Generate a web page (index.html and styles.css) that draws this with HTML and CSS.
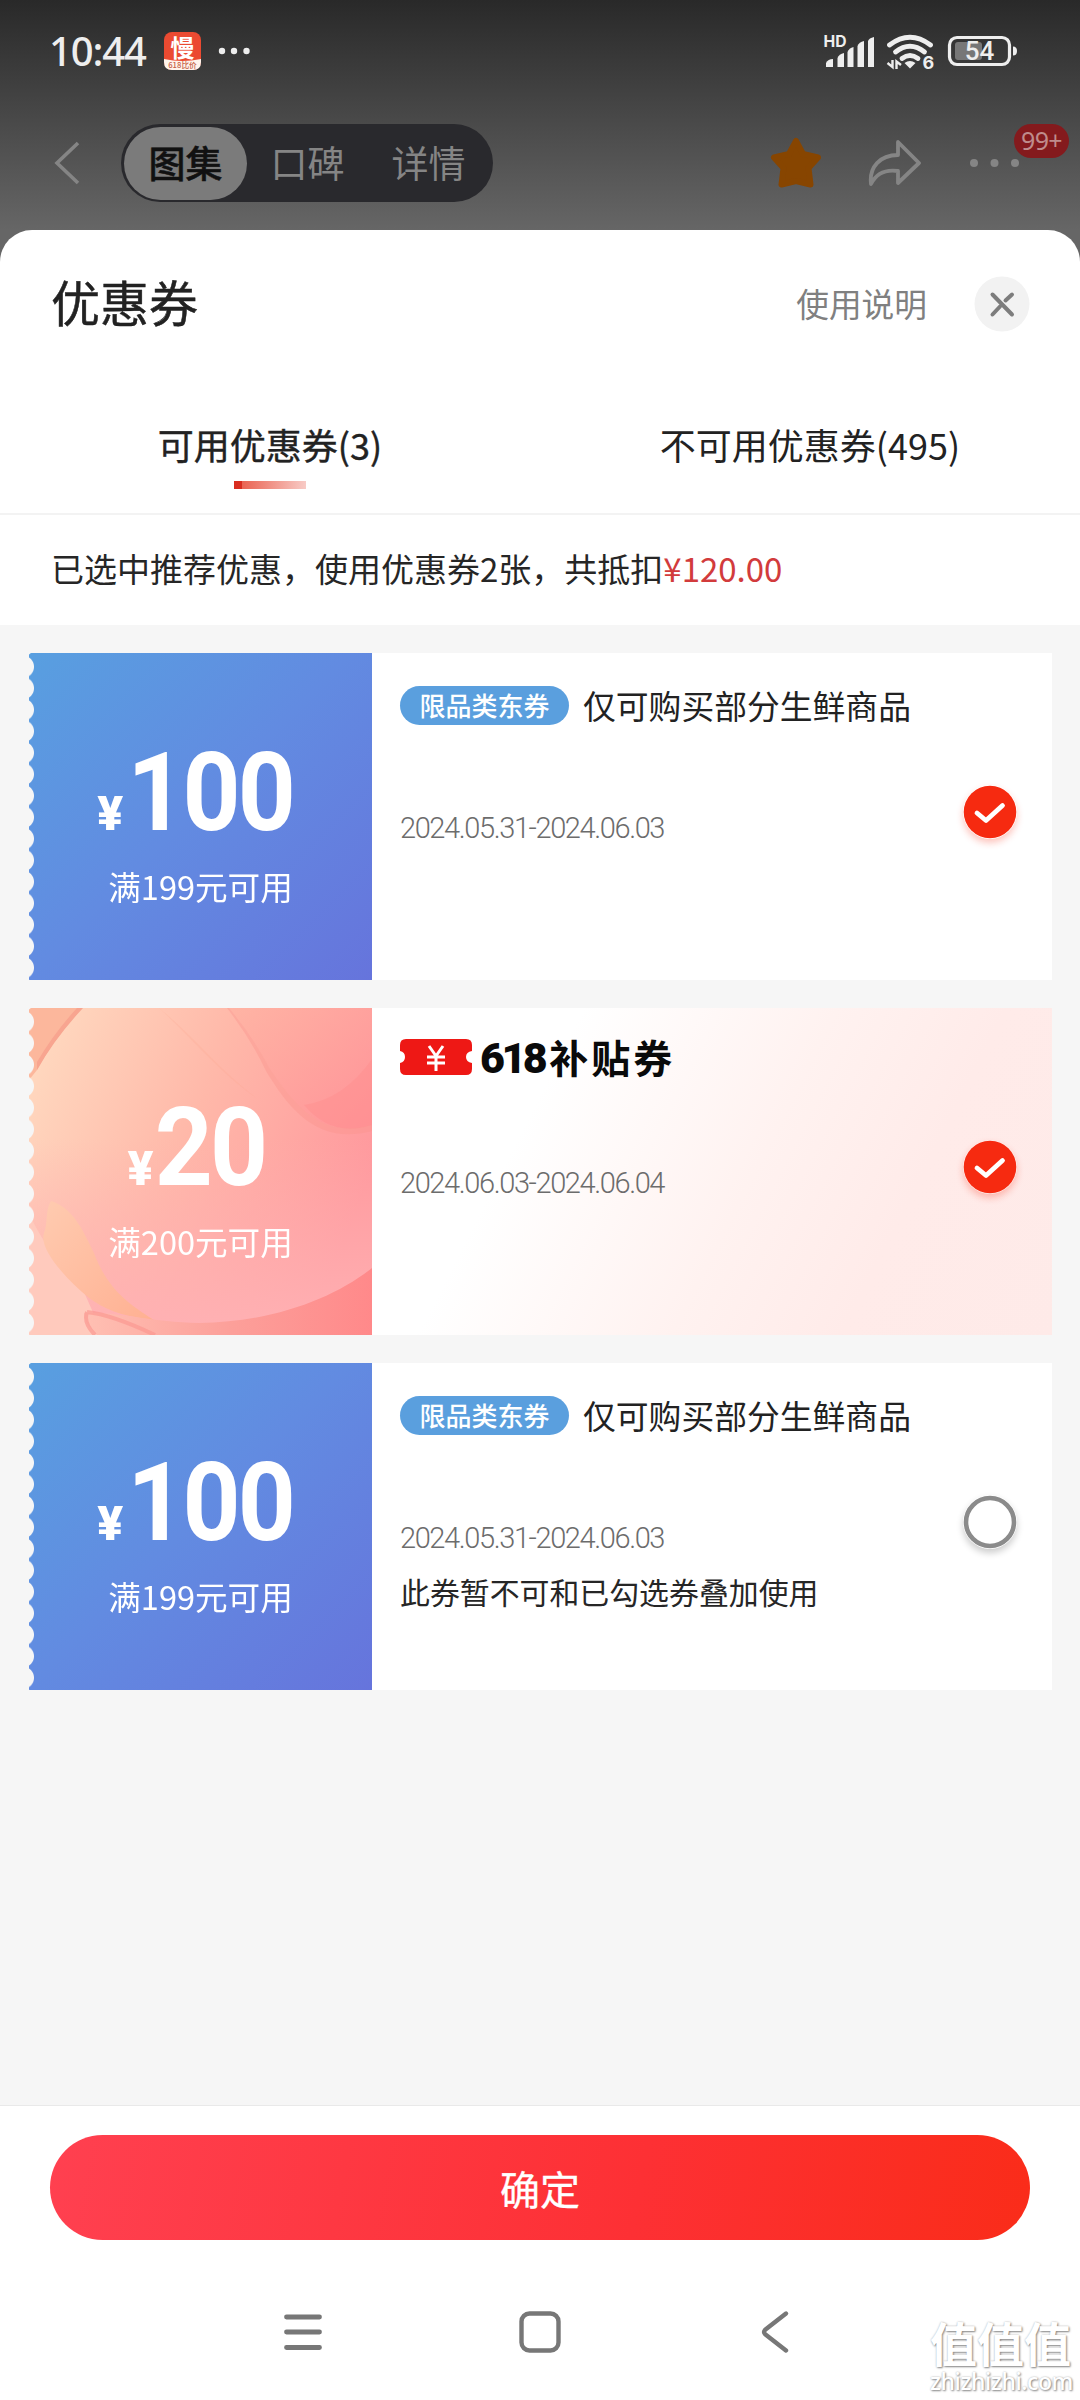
FILE: index.html
```html
<!DOCTYPE html>
<html lang="zh-CN">
<head>
<meta charset="utf-8">
<title>优惠券</title>
<link rel="stylesheet" href="styles.css">
</head>
<body>
<div class="screen">
  <div class="status">
    <div class="status-left">
      <span class="time">10:44</span>
      <svg class="app-icon" width="37" height="38" viewBox="0 0 37 38">
        <rect width="37" height="38" rx="8" fill="#eb4a31"/>
        <path d="M0 27Q18 31 37 27V30Q37 38 29 38H8Q0 38 0 30Z" fill="#fff4ec"/>
        <text class="app-mark" x="18.500" y="24.500" text-anchor="middle">慢</text>
        <text class="app-sub" transform="translate(18.500 36) scale(.35)" text-anchor="middle">618比价</text>
      </svg>
      <svg class="status-dots" width="32" height="8" viewBox="0 0 32 8" fill="#eee"><circle cx="4" cy="4" r="3.2"/><circle cx="16" cy="4" r="3.2"/><circle cx="28.500" cy="4" r="3.2"/></svg>
    </div>
    <svg class="status-right" width="196" height="40" viewBox="822 31 196 40">
      <text x="823.500" y="47" class="hd" textLength="23" lengthAdjust="spacingAndGlyphs">HD</text>
      <g fill="#eee">
        <path d="M826 67V63Q828 59 833 59V67Z"/><path d="M837.500 67V58Q839 54 844 53V67Z"/><path d="M847.500 67V52Q849 48 853.500 47V67Z"/><path d="M857.500 67V46Q859 42 864 41V67Z"/><path d="M868 67V41Q869 38 874 37V67Z"/>
        <path d="M910 68.500L904.500 63Q910 59 915.500 63Z"/>
      </g>
      <g fill="none" stroke="#eee" stroke-width="4.800" stroke-linecap="round">
        <path d="M889.500 45Q910 29.500 930.500 45"/><path d="M895.500 52Q910 40.500 924.500 52"/><path d="M902 58.500Q910 52.500 918 58.500"/>
      </g>
      <path d="M892.500 60V67L887.500 63M896.500 69V61.500L901 65" fill="none" stroke="#eee" stroke-width="2.400"/>
      <text x="922.500" y="69" class="six">6</text>
      <rect x="949.500" y="37.500" width="60" height="27" rx="7.500" fill="none" stroke="#eee" stroke-width="3.200"/>
      <rect x="955" y="42" width="27" height="18" rx="3" fill="#777"/>
      <path d="M1013 46.500Q1017 46.500 1017 51T1013 55.500Z" fill="#eee"/>
      <text x="979.500" y="60" class="battery" text-anchor="middle">54</text>
    </svg>
  </div>

  <div class="topnav">
    <svg class="back" width="28" height="46" viewBox="0 0 28 46" fill="none" stroke="#858585" stroke-width="3.600"><path d="M25 3L4 23L25 43"/></svg>
    <div class="segments"><span class="segment active">图集</span><span class="segment">口碑</span><span class="segment">详情</span></div>
    <div class="top-actions">
      <svg width="54" height="54" viewBox="0 0 54 54" fill="#874500" stroke="#874500" stroke-width="6" stroke-linejoin="round"><path d="M26 5L33 18L48 21.500L38.500 32L40.500 48.500L26 45L11.500 48.500L13.500 32L4 21.500L19 18Z"/></svg>
      <svg class="share" width="56" height="50" viewBox="0 0 56 50" fill="none" stroke="#858585" stroke-width="3.800" stroke-linejoin="round"><path d="M30 4L51 25L30 45V33C16 31 8 36 3 46C1 29 12 17 30 17Z"/></svg>
      <svg class="more" width="50" height="10" viewBox="0 0 50 10" fill="#858585"><circle cx="5" cy="5" r="4"/><circle cx="25.500" cy="5" r="4"/><circle cx="46" cy="5" r="4"/></svg>
      <span class="count">99+</span>
    </div>
  </div>

  <section class="sheet">
    <header class="sheet-head">
      <h1>优惠券</h1>
      <span class="help">使用说明</span>
      <svg class="close" width="56" height="56" viewBox="0 0 56 56"><circle cx="28" cy="28" r="27.500" fill="#f2f2f2"/><path d="M18.500 18.500L38 38.500M18.500 38.500L26 30.500M31.500 24.500L38 18.500" stroke="#7d7d7d" stroke-width="4" stroke-linecap="round"/></svg>
    </header>
    <nav class="tabs">
      <div class="tab selected">可用优惠券(3)</div>
      <div class="tab">不可用优惠券(495)</div>
    </nav>
    <p class="summary">已选中推荐优惠，使用优惠券2张，共抵扣<em>¥120.00</em></p>

    <main class="coupons">
      <article class="coupon">
        <div class="amount"><div class="price"><small>¥</small><strong>100</strong></div><div class="rule">满199元可用</div></div>
        <div class="detail">
          <div class="info">
            <div class="name"><span class="tag">限品类东券</span>仅可购买部分生鲜商品</div>
            <div class="date">2024.05.31-2024.06.03</div>
          </div>
          <svg class="check red" width="54" height="54" viewBox="0 0 54 54"><circle cx="27" cy="27" r="26.300" fill="#f62a10"/><path d="M14 28L23 35.500L39.500 20.500" fill="none" stroke="#fff" stroke-width="4.800" stroke-linecap="round" stroke-linejoin="round"/></svg>
        </div>
      </article>

      <article class="coupon subsidy">
        <div class="amount">
          <svg class="art" width="343" height="327" viewBox="0 0 343 327">
            <defs>
              <linearGradient id="base" x1="0" y1="0.100" x2="1" y2="0.500"><stop offset="0" stop-color="#ffdac0"/><stop offset="0.500" stop-color="#ffb8a9"/><stop offset="1" stop-color="#ff989d"/></linearGradient>
              <linearGradient id="rose" x1="0" y1="0" x2="0" y2="1"><stop offset="0" stop-color="#ffb1b1" stop-opacity="0"/><stop offset="1" stop-color="#ffb1b4"/></linearGradient>
              <linearGradient id="fold" x1="0" y1="0" x2="1" y2="1"><stop offset="0" stop-color="#ffb2a2"/><stop offset="1" stop-color="#ff9096"/></linearGradient>
              <linearGradient id="floor"><stop offset="0" stop-color="#ffc0b3"/><stop offset="0.500" stop-color="#fca09a"/><stop offset="1" stop-color="#ff898a"/></linearGradient>
              <linearGradient id="leaf" x1="0" y1="0" x2="1" y2="1"><stop offset="0" stop-color="#ffcbb0"/><stop offset="1" stop-color="#ffb092"/></linearGradient>
            </defs>
            <path d="M0 0H343V327H0Z" fill="url(#base)"/>
            <path d="M0 130H343V327H0Z" fill="url(#rose)"/>
            <path d="M0 0H53Q25 30 8 62L0 72Z" fill="#fcb79c"/>
            <path d="M48 0H54Q26 30 8 62V54Q25 25 48 0Z" fill="#f8a590"/>
            <path d="M200 0H343V117C292 130 268 100 241 61Q225 30 200 0Z" fill="url(#fold)" opacity=".7"/>
            <path d="M200 0Q225 30 241 61C268 100 292 130 343 117V123C290 137 262 104 237 63Q222 31 198 0Z" fill="#f9938d" opacity=".4"/>
            <path d="M275 97Q315 91 343 51V117Q303 130 275 97Z" fill="#ff8b8d" opacity=".4"/>
            <path d="M130 0C165 28 190 62 230 92C190 65 165 32 130 0Z" fill="#f9a68d" opacity=".2"/>
            <path d="M0 205Q15 240 55 284L74 327H0Z" fill="#ffcabd"/>
            <path d="M22 193C45 200 55 225 65 245C78 280 98 295 125 312C95 308 80 304 60 290C30 265 10 238 15 225C19 215 16 202 22 193Z" fill="url(#leaf)"/>
            <path d="M55 305C95 304 120 314 170 315C245 314 305 290 343 260V327H68Q54 314 55 305Z" fill="url(#floor)"/>
            <path d="M58 304Q54 315 66 327M58 304Q84 307 126 327" fill="none" stroke="#fb9992" stroke-width="4" opacity=".7"/>
          </svg>
          <div class="price"><small>¥</small><strong>20</strong></div><div class="rule">满200元可用</div>
        </div>
        <div class="detail">
          <div class="info">
            <div class="name bold"><svg width="72" height="38" viewBox="0 0 72 38"><path d="M6 1H66Q72 1 72 7V13Q66 14 66 19T72 25V31Q72 37 66 37H6Q0 37 0 31V25Q5 24 5 19T0 13V7Q0 1 6 1Z" fill="#ee1815"/><path d="M29 8L36 18L43 8M36 18V33M27 19H45M27 25H45" fill="none" stroke="#fff" stroke-width="3"/></svg><span class="logo-name"><b>618</b>补贴券</span></div>
            <div class="date">2024.06.03-2024.06.04</div>
          </div>
          <svg class="check red" width="54" height="54" viewBox="0 0 54 54"><circle cx="27" cy="27" r="26.300" fill="#f62a10"/><path d="M14 28L23 35.500L39.500 20.500" fill="none" stroke="#fff" stroke-width="4.800" stroke-linecap="round" stroke-linejoin="round"/></svg>
        </div>
      </article>

      <article class="coupon">
        <div class="amount"><div class="price"><small>¥</small><strong>100</strong></div><div class="rule">满199元可用</div></div>
        <div class="detail">
          <div class="info">
            <div class="name"><span class="tag">限品类东券</span>仅可购买部分生鲜商品</div>
            <div class="date">2024.05.31-2024.06.03</div>
            <div class="note">此券暂不可和已勾选券叠加使用</div>
          </div>
          <svg class="check" width="54" height="54" viewBox="0 0 54 54"><circle cx="27" cy="27" r="24" fill="#fff" stroke="#8b8b8b" stroke-width="4.600"/></svg>
        </div>
      </article>
    </main>

    <footer class="confirm-bar"><button class="confirm">确定</button></footer>
    <div class="system-nav">
      <svg width="40" height="42" viewBox="0 0 40 42" stroke="#777" stroke-width="4.800" stroke-linecap="round"><path d="M3.500 6H36.500M3.500 21H36.500M3.500 36.500H36.500"/></svg>
      <svg width="42" height="42" viewBox="0 0 42 42" fill="none" stroke="#777" stroke-width="4.400"><rect x="2.500" y="2.500" width="37" height="37" rx="8"/></svg>
      <svg width="40" height="42" viewBox="0 0 40 42" fill="none" stroke="#777" stroke-width="4.400" stroke-linecap="round"><path d="M30 2.500L9.500 18.500Q6.500 21 9.500 23.500L30 39.500"/></svg>
    </div>
  </section>
  <div class="watermark"><span>值值值</span><span class="domain">zhizhizhi.com</span></div>
</div>
</body>
</html>
```
FILE: styles.css
```css
* { box-sizing: border-box; }
body { margin: 0; font-family: "Noto Sans CJK SC", sans-serif; color: #222; }
svg { display: block; flex: none; }
.screen { position: relative; width: 1080px; height: 2400px; overflow: hidden; display: flex; flex-direction: column; background: linear-gradient(#292929, #666 230px, #666); }

.status { height: 102px; padding: 0 62px 0 49px; display: flex; align-items: center; justify-content: space-between; }
.status-left { display: flex; align-items: center; }
.time { width: 115px; font: 500 40px/50px "Noto Sans", sans-serif; letter-spacing: -1.100px; color: #eee; }
.app-mark { font-size: 24px; font-weight: 700; fill: #fff; }
.app-sub { font-size: 22px; font-weight: 500; fill: #c65f48; }
.status-dots { margin-left: 17px; }
.hd { font: 700 16px Inter, sans-serif; fill: #eee; }
.six { font: 700 18px Inter, sans-serif; fill: #eee; }
.battery { font: 500 26px Roboto, sans-serif; fill: #eee; }

.topnav { height: 128px; padding: 22px 0 0 53px; display: flex; align-items: flex-start; }
.back { margin-top: 16px; }
.segments { width: 372px; height: 78px; margin-left: 40px; padding: 3px; border-radius: 39px; background: #29292d; display: flex; align-items: center; }
.segment { width: 121px; font-size: 37px; line-height: 70px; height: 73px; text-align: center; color: #858585; }
.segment.active { width: 123px; border-radius: 37px; background: #7b7b7b; color: #111; font-weight: 500; -webkit-text-stroke: .5px #111; }
.top-actions { flex: 1; position: relative; height: 78px; padding-left: 277px; display: flex; align-items: center; }
.share { margin-left: 44px; }
.more { margin-left: 45px; }
.count { position: absolute; left: 521px; top: 0; width: 55px; height: 34px; border-radius: 17px; background: #841a1d; color: #bf8c8c; font: 25px/32px "Noto Sans", sans-serif; letter-spacing: -.6px; text-align: center; }

.sheet { flex: 1; background: #fff; border-radius: 32px 32px 0 0; display: flex; flex-direction: column; }
.sheet-head { height: 148px; padding: 0 50px 0 51px; display: flex; align-items: center; }
h1 { flex: 1; margin: -6px 0 0; font-size: 49px; line-height: 60px; font-weight: 400; -webkit-text-stroke: .5px #222; }
.help { margin-top: -2px; font-size: 32.700px; line-height: 48px; color: #808080; }
.close { margin-left: 47px; }
.tabs { height: 137px; display: grid; grid-template-columns: 1fr 1fr; border-bottom: 2px solid #f3f3f3; }
.tab { display: flex; flex-direction: column; align-items: center; padding-top: 39px; font-size: 36px; line-height: 54px; }
.tab.selected { -webkit-text-stroke: .4px #222; }
.selected::after { content: ""; width: 72px; height: 8px; margin-top: 10px; background: linear-gradient(90deg, #d92d20 8px, #ea6352 8px, #f8cbc6); }
.summary { height: 110px; margin: 0; padding-left: 51px; font-size: 33px; line-height: 106px; color: #262626; }
.summary em { font-style: normal; color: #d23b3c; }

.coupons { flex: 1; padding: 28px 28px 0 29px; background: #f6f6f6; display: flex; flex-direction: column; gap: 28px; }
.coupon { height: 327px; display: flex; }
.amount { position: relative; width: 343px; padding-top: 84px; color: #fff; text-align: center; background: linear-gradient(135deg, #589fe0, #628be1 48%, #6674dc);
  -webkit-mask: radial-gradient(circle at -6px 50%, transparent 10.500px, #000 11.500px) 0 3px / 100% 21.500px; mask: radial-gradient(circle at -6px 50%, transparent 10.500px, #000 11.500px) 0 3px / 100% 21.500px; }
.art { position: absolute; inset: 0; }
.price { position: relative; height: 112px; padding-right: 10px; display: flex; justify-content: center; align-items: baseline; font-family: Roboto, sans-serif; line-height: 112px; }
.price small { font-size: 48px; font-weight: 900; }
.price strong { margin: 0 -7px 0 -3px; font-size: 110px; font-weight: 700; letter-spacing: -3px; transform: scaleX(.92); }
.rule { position: relative; margin-top: 14px; font-size: 32.600px; line-height: 46px; }
.detail { flex: 1; padding: 0 35px 0 28px; display: flex; justify-content: space-between; background: #fff; }
.subsidy .detail { background: linear-gradient(117deg, #fff 25%, #fff2f0 55%, #ffebe9 75%, #feeae8); }
.info { display: flex; flex-direction: column; padding-top: 28px; }
.name { height: 48px; display: flex; align-items: center; gap: 14px; font-size: 32.800px; line-height: 46px; color: #222; }
.tag { width: 169px; height: 39px; border-radius: 20px; background: #5a9fde; color: #fff; font-size: 26px; line-height: 37px; font-weight: 500; text-align: center; }
.name.bold { gap: 8px; font-size: 39px; letter-spacing: 3px; font-weight: 700; color: #0a0a0a; margin-top: -3px; margin-bottom: 3px; }
.logo-name { white-space: nowrap; }
.logo-name b { font: 900 43px/46px Roboto, sans-serif; letter-spacing: -3.500px; margin-right: 5px; }
.date { margin-top: 79px; font: 300 29px/40px Roboto, sans-serif; letter-spacing: -1.400px; color: #6c6c6c; }
.note { margin-top: 10px; font-size: 29.900px; line-height: 46px; color: #262626; }
.check { margin-top: 132px; border-radius: 50%; box-shadow: 0 4px 7px #0003; }
.check.red { box-shadow: 0 4px 7px #f62a1044; }

.confirm-bar { height: 135px; border-top: 1px solid #e9e9e9; padding: 29px 50px 0; }
.confirm { display: block; width: 980px; height: 105px; padding: 0; border: 0; border-radius: 53px; background: linear-gradient(100deg, #ff4050, #fd3034 60%, #fa2c19); color: #fff; font: 400 40px/98px "Noto Sans CJK SC", sans-serif; }
.confirm { -webkit-text-stroke: .3px #fff; }
.system-nav { height: 160px; padding: 71px 284px 0 283px; display: flex; justify-content: space-between; align-items: flex-start; }
.watermark { position: absolute; left: 930px; top: 2316px; display: flex; flex-direction: column; color: #fff; font-size: 47px; line-height: 52px; font-weight: 700; text-shadow: 1px 1px 2px #888, 0 0 2px #bbb; white-space: nowrap; }
.domain { font: 500 23px/27px "Noto Sans", sans-serif; letter-spacing: -.4px; }
```
